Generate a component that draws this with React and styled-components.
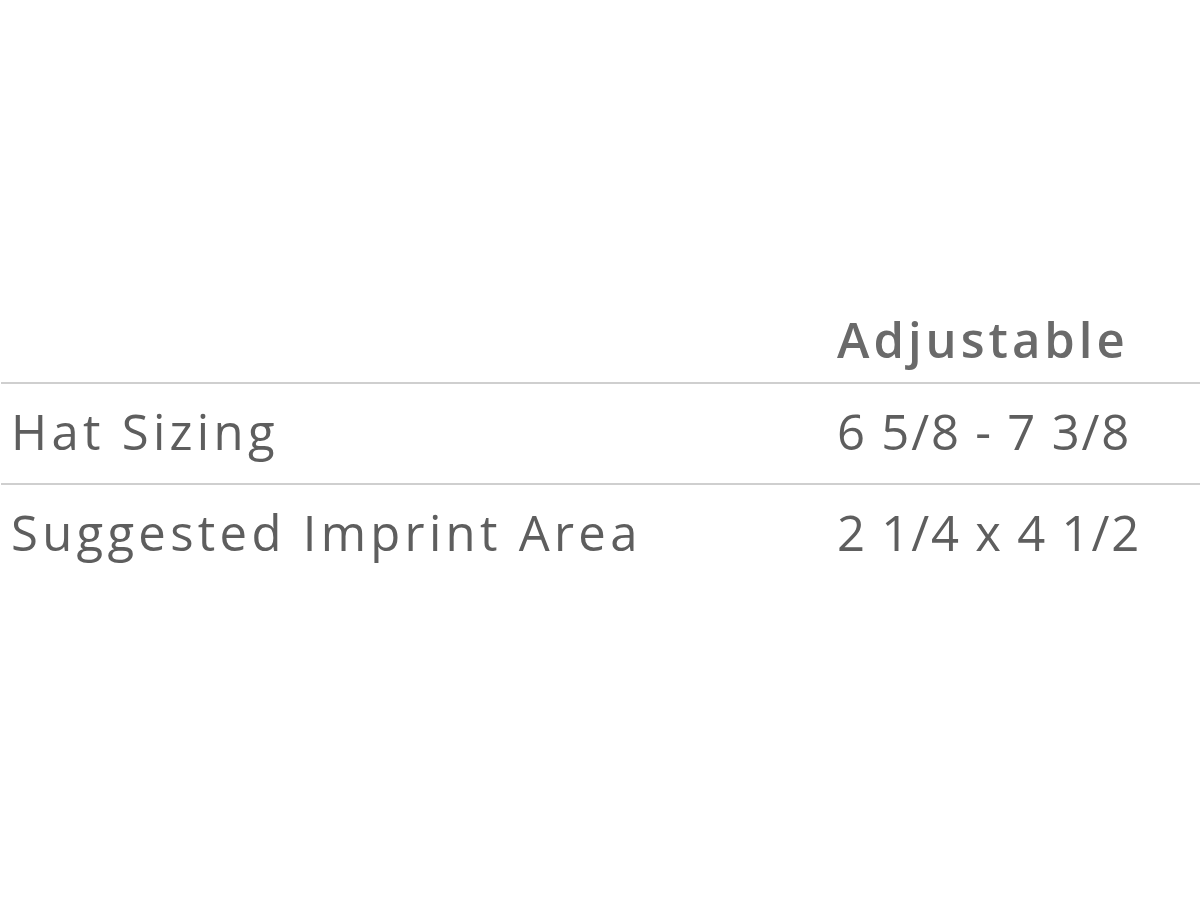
import styled, { createGlobalStyle } from 'styled-components'

const GlobalStyle = createGlobalStyle`
  html, body {
    margin: 0;
    background: #fff;
  }
`

const specs = [
  { label: 'Hat Sizing', value: '6 5/8 - 7 3/8' },
  { label: 'Suggested Imprint Area', value: '2 1/4 x 4 1/2' },
]

const Page = styled.div`
  padding: 292px 1px 0 1px;
  font-family: "Open Sans", "Liberation Sans", sans-serif;
  color: #5e5e5e;
`

const SpecTable = styled.table`
  width: 100%;
  border-collapse: collapse;
`

const Row = styled.tr`
  border-bottom: ${p => (p.$last ? 'none' : '2px solid #cfcfcf')};
`

const Head = styled.th`
  text-align: left;
  font-size: 49px;
  line-height: 60px;
  font-weight: 600;
  letter-spacing: 4px;
  color: #6a6a6a;
  padding: 17px 10px 13px;
  width: ${p => (p.$first ? '806px' : 'auto')};
`

const Cell = styled.td`
  font-size: 49px;
  line-height: 60px;
  font-weight: 400;
  letter-spacing: ${p => (p.$first ? '4.3px' : '1.8px')};
  padding: 17px 10px 22px;
  width: ${p => (p.$first ? '806px' : 'auto')};
`

export default function App() {
  return (
    <Page>
      <GlobalStyle />
      <SpecTable>
        <thead>
          <Row>
            <Head $first />
            <Head>Adjustable</Head>
          </Row>
        </thead>
        <tbody>
          {specs.map((s, i) => (
            <Row key={s.label} $last={i === specs.length - 1}>
              <Cell $first>{s.label}</Cell>
              <Cell>{s.value}</Cell>
            </Row>
          ))}
        </tbody>
      </SpecTable>
    </Page>
  )
}
